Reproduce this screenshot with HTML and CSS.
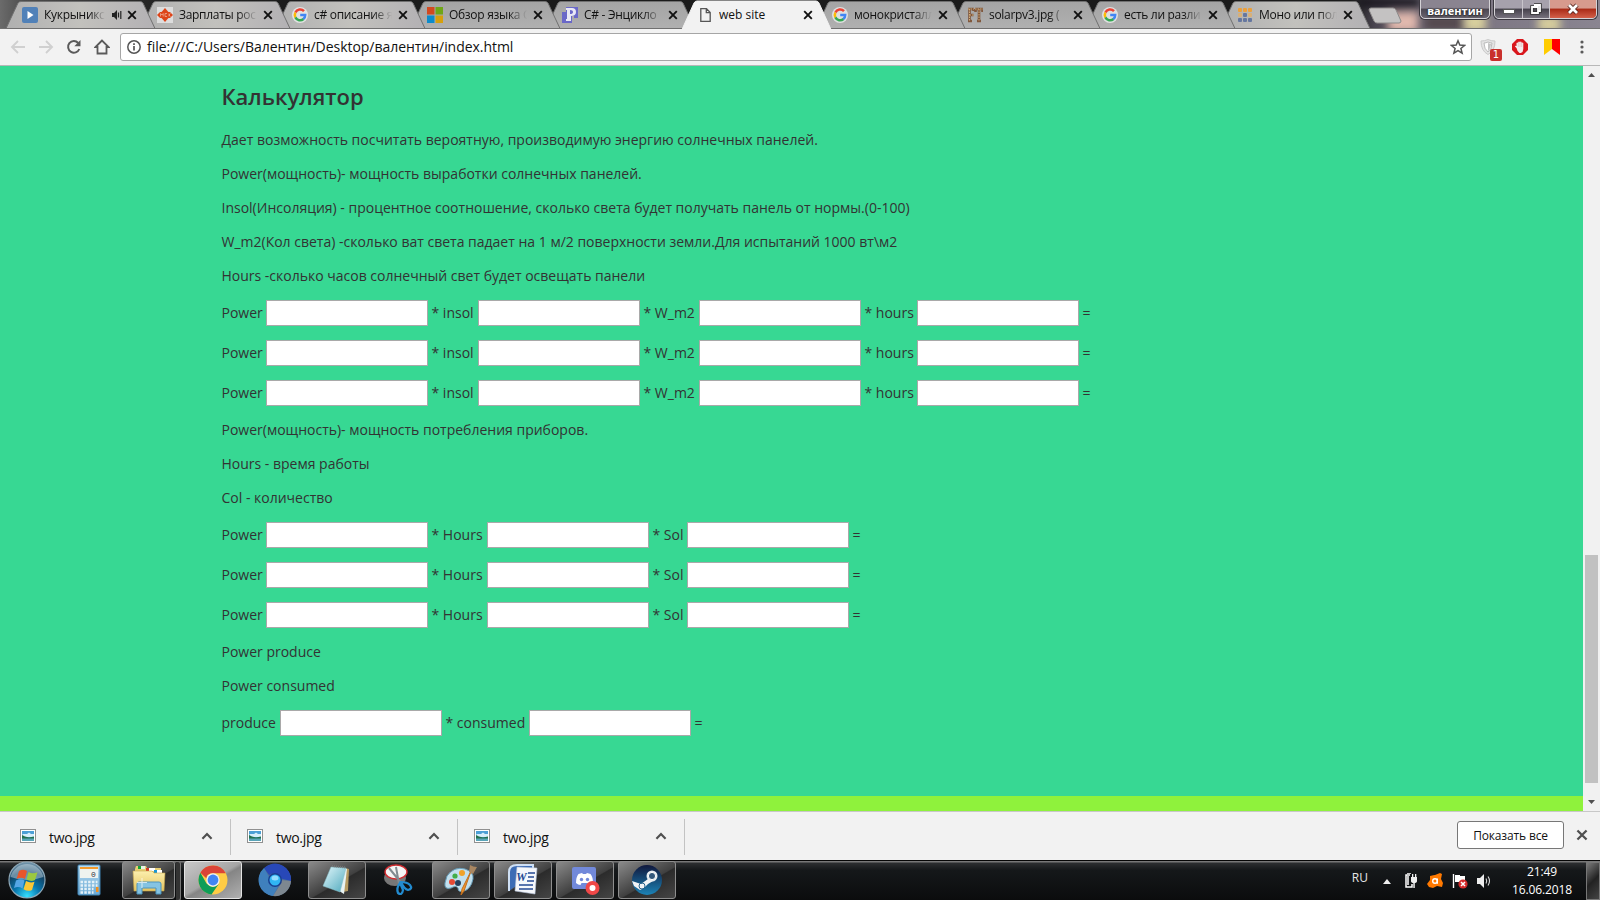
FILE: index.html
```html
<!DOCTYPE html>
<html lang="ru">
<head>
<meta charset="utf-8">
<title>web site</title>
<link rel="stylesheet" href="styles.css">
</head>
<body>
<svg width="0" height="0" class="defs">
  <defs>
    <linearGradient id="tabfill" x1="0" x2="0" y1="0" y2="1"><stop offset="0" stop-color="#a4a4a4"/><stop offset="1" stop-color="#b0b0b0"/></linearGradient>
    <linearGradient id="tablight" x1="0" x2="1" y1="0" y2="0"><stop offset="0" stop-color="#b0b0b0"/><stop offset=".5" stop-color="#c2c1bd"/><stop offset="1" stop-color="#b3b1b4"/></linearGradient>
    <symbol id="close" viewBox="0 0 10 10"><path d="M1.2 1.2 8.8 8.8M8.800 1.2 1.2 8.8" stroke="currentColor" stroke-width="1.9" fill="none"/></symbol>
    <symbol id="google" viewBox="0 0 16 16"><circle cx="8" cy="8" r="8" fill="#f1f1f1" opacity=".75"/><g fill="none" stroke-width="2.5"><path d="M12 4.2A5.2 5.2 0 0 0 3.4 5.6" stroke="#ea4335"/><path d="M3.4 5.6a5.2 5.2 0 0 0 0 4.8" stroke="#fbbc05"/><path d="M3.4 10.4A5.2 5.2 0 0 0 11.5 12" stroke="#34a853"/><path d="M11.3 12.1A5.2 5.2 0 0 0 13.2 8H8.2" stroke="#4285f4"/></g></symbol>
    <symbol id="pic" viewBox="0 0 16 14"><rect x=".5" y=".5" width="15" height="13" fill="#fff" stroke="#909090"/><rect x="2" y="2" width="12" height="10" fill="#4c9fd6"/><path d="M3 5h4l2-1.500 2 1.500h3v3H2V6z" fill="#d6eefb"/><path d="M2 6l3 1.500 4 1 5-1V10H2z" fill="#22704e"/><path d="M2 9.500h12V12H2z" fill="#5aa4b8"/></symbol>
    <symbol id="chev" viewBox="0 0 10 7"><path d="M1 6 5 1.800 9 6" fill="none" stroke="#505050" stroke-width="1.900"/></symbol>
    <radialGradient id="orb" cx=".5" cy=".95" r=".9"><stop offset="0" stop-color="#35e0ff"/><stop offset=".4" stop-color="#0877ae"/><stop offset=".75" stop-color="#124466"/><stop offset="1" stop-color="#6b8fa6"/></radialGradient>
    <linearGradient id="calc" x1="0" x2="0" y1="0" y2="1"><stop offset="0" stop-color="#b7dcf2"/><stop offset="1" stop-color="#6ba9d4"/></linearGradient>
    <linearGradient id="folder" x1="0" x2="0" y1="0" y2="1"><stop offset="0" stop-color="#fcefae"/><stop offset="1" stop-color="#e5c460"/></linearGradient>
    <linearGradient id="steam" x1="0" x2="0" y1="0" y2="1"><stop offset="0" stop-color="#10173c"/><stop offset="1" stop-color="#1c83b6"/></linearGradient>
    <linearGradient id="note" x1="0" x2="1" y1="0" y2="1"><stop offset="0" stop-color="#e2f7fb"/><stop offset="1" stop-color="#4fa9bd"/></linearGradient>
  </defs>
</svg>
<div class="window">
  <header class="frame">
    <div class="glass"><i class="g1"></i><i class="g2"></i><i class="g3"></i><i class="g4"></i><i class="g5"></i></div>
    <svg class="shapes" width="1600" height="29" viewBox="0 0 1600 29" stroke="#707070" stroke-width="1">
      <path d="M1221 28.500 1233 3Q1234 1.500 1236 1.500H1355Q1357 1.500 1358 3L1370 28.500z" fill="url(#tablight)"/>
      <path d="M1086 28.500 1098 3Q1099 1.500 1101 1.500H1220Q1222 1.500 1223 3L1235 28.500z" fill="url(#tabfill)"/>
      <path d="M951 28.500 963 3Q964 1.500 966 1.500H1085Q1087 1.500 1088 3L1100 28.500z" fill="url(#tabfill)"/>
      <path d="M816 28.500 828 3Q829 1.500 831 1.500H950Q952 1.500 953 3L965 28.500z" fill="url(#tabfill)"/>
      <path d="M546 28.500 558 3Q559 1.500 561 1.500H680Q682 1.500 683 3L695 28.500z" fill="url(#tabfill)"/>
      <path d="M411 28.500 423 3Q424 1.500 426 1.500H545Q547 1.500 548 3L560 28.500z" fill="url(#tabfill)"/>
      <path d="M276 28.500 288 3Q289 1.500 291 1.500H410Q412 1.500 413 3L425 28.500z" fill="url(#tablight)"/>
      <path d="M141 28.500 153 3Q154 1.500 156 1.500H275Q277 1.500 278 3L290 28.500z" fill="url(#tablight)"/>
      <path d="M6 28.500 18 3Q19 1.500 21 1.500H140Q142 1.500 143 3L155 28.500z" fill="url(#tablight)"/>
      <path d="M0 28.500H1600" />
      <path d="M682 29.500 694 3Q695 1 697 1H816Q818 1 819 3L831 29.500z" fill="#f2f2f2" stroke="#f2f2f2"/>
      <path d="M1371 8H1393Q1395 8 1396 10L1401 21Q1401 23 1399 23H1377Q1375 23 1374 21L1369 10Q1369 8 1371 8z" fill="#c4c2c2" stroke="#8d8a8a"/>
    </svg>
    <nav class="tabs">
      <div class="tab first"><svg class="ico" viewBox="0 0 16 16"><rect width="16" height="16" rx="2" fill="#5181b8"/><path d="M5.500 4 11.500 8l-6 4z" fill="#fff"/></svg><span class="t">Кукрыникс</span><svg class="snd" viewBox="0 0 10 10"><path d="M0 3h2l3-3v10L2 7H0z" fill="#222"/><path d="M6.500 2.500v5M8.800 1v8" stroke="#222" stroke-width="1.200"/></svg><svg class="x"><use href="#close"/></svg></div>
      <div class="tab"><svg class="ico" viewBox="0 0 16 16"><rect width="16" height="16" fill="#ddd"/><path d="M8 1 14 8 8 15 2 8z" fill="#dd4418"/><path d="M0 8 3 5h10l3 3-3 3H3z" fill="#dd4418"/><path d="M3.500 6.500v3M3.500 6.500l1.500 1.500 1.200-1.500v3M8 6.500v3h2M8 6.500h2M12 6.500v3M13.500 6.500l-1.500 1.500 1.500 1.500" fill="none" stroke="#f0a990" stroke-width=".8"/></svg><span class="t">Зарплаты рос</span><svg class="x"><use href="#close"/></svg></div>
      <div class="tab"><svg class="ico"><use href="#google"/></svg><span class="t">c# описание я</span><svg class="x"><use href="#close"/></svg></div>
      <div class="tab"><svg class="ico" viewBox="0 0 16 16"><path d="M0 0h7.500v7.500H0z" fill="#d3491f"/><path d="M8.500 0H16v7.500H8.500z" fill="#6fa616"/><path d="M0 8.500h7.500V16H0z" fill="#0c8bcb"/><path d="M8.500 8.500H16V16H8.500z" fill="#d6a00c"/></svg><span class="t">Обзор языка C</span><svg class="x"><use href="#close"/></svg></div>
      <div class="tab"><svg class="ico" viewBox="0 0 16 16"><path d="M0 5h4V0h12v11h-4V9h-2v7H0z" fill="#6a68c8"/><path d="M4 1h6q4 0 4 4t-5 4v5H4V12h1V3H4zM8 3v4q3 0 3-2T8 3z" fill="#e9e8f6"/></svg><span class="t">C# - Энцикло</span><svg class="x"><use href="#close"/></svg></div>
      <div class="tab active"><svg class="ico" viewBox="0 0 16 16"><path d="M3.800 1.700H9.500l3.700 3.700v9H3.800zM9.300 2v3.600H13" fill="none" stroke="#555" stroke-width="1.300"/></svg><span class="t">web site</span><svg class="x"><use href="#close"/></svg></div>
      <div class="tab"><svg class="ico"><use href="#google"/></svg><span class="t">монокристалл</span><svg class="x"><use href="#close"/></svg></div>
      <div class="tab"><svg class="ico" viewBox="0 0 16 16"><path d="M1 2h6M2.500 2v12M1 14h4M2.500 8h4M6.500 2v2M8 2h8M8.500 2v3M15.500 2v3M12 2v12M10 14h4" fill="none" stroke="#80583e" stroke-width="2.600"/><path d="M1 2h6M2.500 2v12M2.500 8h4M8 2h8M12 2v12" fill="none" stroke="#d3ac78" stroke-width="1" stroke-dasharray="1.500 1"/></svg><span class="t">solarpv3.jpg (</span><svg class="x"><use href="#close"/></svg></div>
      <div class="tab"><svg class="ico"><use href="#google"/></svg><span class="t">есть ли разли</span><svg class="x"><use href="#close"/></svg></div>
      <div class="tab"><svg class="ico" viewBox="0 0 16 16"><g fill="#eba03c"><rect x="1" y="1" width="4" height="4" rx="1"/><rect x="6" y="1" width="4" height="4" rx="1"/><rect x="11" y="1" width="4" height="4" rx="1"/></g><g fill="#66779f"><rect x="1" y="6" width="4" height="4" rx="1" fill="#d8b078"/><rect x="6" y="6" width="4" height="4" rx="1"/><rect x="11" y="6" width="4" height="4" rx="1" fill="#d8b078"/><rect x="1" y="11" width="4" height="4" rx="1"/><rect x="6" y="11" width="4" height="4" rx="1"/><rect x="11" y="11" width="4" height="4" rx="1"/></g></svg><span class="t">Моно или пол</span><svg class="x"><use href="#close"/></svg></div>
    </nav>
    <div class="user">валентин</div>
    <div class="controls">
      <div class="min"><svg width="12" height="5"><rect x=".5" y=".5" width="11" height="4" fill="#fff" stroke="#555"/></svg></div>
      <div class="max"><svg width="12" height="12" fill="none"><path d="M4 2h6v6H8M2 4h6v6H2z" stroke="#333" stroke-width="3.500"/><path d="M4 2h6v6H8M2 4h6v6H2z" stroke="#fff" stroke-width="1.800"/></svg></div>
      <div class="cls"><svg width="14" height="12" fill="none"><path d="m3 2 8 8M11 2l-8 8" stroke="#50201a" stroke-width="4.500"/><path d="m3 2 8 8M11 2l-8 8" stroke="#fff" stroke-width="2.800"/></svg></div>
    </div>
  </header>
  <div class="toolbar">
    <svg class="nav" viewBox="0 0 16 16"><path d="M15 8H2.500M8 2 2 8l6 6" stroke="#d0d0d0" stroke-width="1.900" fill="none"/></svg>
    <svg class="nav" viewBox="0 0 16 16"><path d="M1 8h12.500M8 2l6 6-6 6" stroke="#d0d0d0" stroke-width="1.900" fill="none"/></svg>
    <svg class="nav" viewBox="0 0 16 16"><path d="M13.300 10A5.800 5.800 0 1 1 12.200 4" stroke="#5a5a5a" stroke-width="2" fill="none"/><path d="M14.500 1v6.300H8.300z" fill="#5a5a5a"/></svg>
    <svg class="nav" viewBox="0 0 16 16"><path d="M8 1.500 1.500 8h2v6.500h9V8h2z" stroke="#5a5a5a" stroke-width="1.800" fill="none"/></svg>
    <div class="omni">
      <svg width="16" height="16" viewBox="0 0 16 16"><circle cx="8" cy="8" r="6.200" fill="none" stroke="#555" stroke-width="1.500"/><path d="M8 7v4.500M8 4.200v1.700" stroke="#555" stroke-width="1.700"/></svg>
      <span class="url">file:///C:/Users/Валентин/Desktop/валентин/index.html</span>
      <svg class="star" width="16" height="16" viewBox="0 0 16 16"><path d="m8 1.800 1.800 4.300 4.700.4-3.600 3 1.200 4.600L8 11.600l-4.100 2.500 1.200-4.600-3.600-3 4.700-.4z" fill="none" stroke="#555" stroke-width="1.500"/></svg>
    </div>
    <div class="ext shield"><svg width="16" height="16" viewBox="0 0 16 16"><path d="M1 2q4 0 7-1.500Q11 2 15 2q0 10-7 13.500Q1 12 1 2z" fill="#e3e3e3" stroke="#cacaca"/><path d="M4 4q2 0 4-1 2 1 4 1 0 6-4 9Q4 10 4 4z" fill="#fff" stroke="#bbb"/><path d="M8 4v8q3-3 3-7z" fill="#c4c4c4"/></svg><b>1</b></div>
    <svg class="ext" width="16" height="16" viewBox="0 0 16 16"><path d="M5 0h6l5 5v6l-5 5H5l-5-5V5z" fill="#d9171d"/><path d="M4.500 9 3 7.500q.2-1.300 1.500-.5V4q.9-1.200 1.700 0V3q.9-1.200 1.700 0 .9-1.200 1.700 0v1q1-1.200 1.700 0v6q0 3-2.500 4H7.500Q5 12 4.500 9z" fill="#f1eeee"/><path d="M6.300 4v4M8 3v5M9.700 4v4" stroke="#e3a4a4" stroke-width=".5"/></svg>
    <svg class="ext" width="16" height="16" viewBox="0 0 16 16"><path d="M0 0h8v10L0 16z" fill="#fc0"/><path d="M8 0h8v16L8 10z" fill="#f00"/></svg>
    <svg class="menu" width="4" height="14" fill="#5a5a5a"><circle cx="2" cy="2" r="1.600"/><circle cx="2" cy="7" r="1.600"/><circle cx="2" cy="12" r="1.600"/></svg>
  </div>
  <div class="view">
    <main class="page">
      <section class="calc">
        <h2>Калькулятор</h2>
        <p>Дает возможность посчитать вероятную, производимую энергию солнечных панелей.</p>
        <p>Power(мощность)- мощность выработки солнечных панелей.</p>
        <p>Insol(Инсоляция) - процентное соотношение, сколько света будет получать панель от нормы.(0-100)</p>
        <p>W_m2(Кол света) -сколько ват света падает на 1 м/2 поверхности земли.Для испытаний 1000 вт\м2</p>
        <p>Hours -сколько часов солнечный свет будет освещать панели</p>
        <div class="row"><label class="w-power">Power</label><input><label class="w-insol">* insol</label><input><label class="w-wm">* W_m2</label><input><label class="w-hours">* hours</label><input><span>=</span></div>
        <div class="row"><label class="w-power">Power</label><input><label class="w-insol">* insol</label><input><label class="w-wm">* W_m2</label><input><label class="w-hours">* hours</label><input><span>=</span></div>
        <div class="row"><label class="w-power">Power</label><input><label class="w-insol">* insol</label><input><label class="w-wm">* W_m2</label><input><label class="w-hours">* hours</label><input><span>=</span></div>
        <p>Power(мощность)- мощность потребления приборов.</p>
        <p>Hours - время работы</p>
        <p>Col - количество</p>
        <div class="row"><label class="w-power">Power</label><input><label class="w-time">* Hours</label><input><label class="w-sol">* Sol</label><input><span>=</span></div>
        <div class="row"><label class="w-power">Power</label><input><label class="w-time">* Hours</label><input><label class="w-sol">* Sol</label><input><span>=</span></div>
        <div class="row"><label class="w-power">Power</label><input><label class="w-time">* Hours</label><input><label class="w-sol">* Sol</label><input><span>=</span></div>
        <p>Power produce</p>
        <p>Power consumed</p>
        <div class="row"><label class="w-prod">produce</label><input><label class="w-cons">* consumed</label><input><span>=</span></div>
      </section>
      <footer class="lime"></footer>
    </main>
    <aside class="scroll"><svg width="17" height="17"><path d="M5 11h7L8.500 7z" fill="#505050"/></svg><div class="thumb"></div><svg width="17" height="17"><path d="M5 6h7l-3.500 4z" fill="#505050"/></svg></aside>
  </div>
  <div class="shelf">
    <div class="file"><svg width="16" height="14"><use href="#pic"/></svg><span>two.jpg</span><svg class="chev"><use href="#chev"/></svg></div>
    <div class="file"><svg width="16" height="14"><use href="#pic"/></svg><span>two.jpg</span><svg class="chev"><use href="#chev"/></svg></div>
    <div class="file"><svg width="16" height="14"><use href="#pic"/></svg><span>two.jpg</span><svg class="chev"><use href="#chev"/></svg></div>
    <button class="all">Показать все</button>
    <svg class="shut"><use href="#close"/></svg>
  </div>
  <div class="taskbar">
    <div class="start"><svg width="38" height="38" viewBox="0 0 38 38"><circle cx="19" cy="19" r="18" fill="url(#orb)" stroke="#8fa9b8" stroke-width="1.200"/><path d="M2.500 16A17 17 0 0 1 35.500 16Q19 22 2.500 16z" fill="#d5e5ee" opacity=".45"/><path d="M11 10q4-2.500 8 0l-2 8q-4-2.500-8.500 0z" fill="#e8562b"/><path d="M20.500 11q4 2.500 9 .2L27 19q-4 2-8.500-.5z" fill="#9bc93f"/><path d="M8 19.500q4.500-2.500 8.500 0l-2 8q-4-2.500-8.500-.5z" fill="#56a6e5"/><path d="M18 20q4.500 2.500 8.500.7L24 29q-4 2-8.500-.7z" fill="#fbc735"/></svg></div>
    <div class="app bare"><svg width="24" height="32" viewBox="0 0 24 32"><rect x="1" y="1" width="22" height="30" rx="1" fill="url(#calc)" stroke="#3f82b2"/><path d="M3 3h18v2H3z" fill="#f39a2c"/><path d="M3 5h18v9H3z" fill="#eef3ef"/><text x="14" y="12.500" class="digit">0</text><g stroke="#e4f1f8" stroke-width="2.300" stroke-dasharray="2.500 1.300"><path d="M3.500 18h17M3.500 21.500h17M3.500 25h13M3.500 28.500h13"/></g><path d="M19 23h2.500v5H19z" fill="#f08f1e"/></svg></div>
    <div class="app stack"><svg width="34" height="32" viewBox="0 0 34 32"><path d="M3 5l1-3h10l1 2h14v5H3z" fill="#e8cf76"/><path d="M6 2h7v3H6z" fill="#e9f5e6"/><path d="M6 2h3v3H6z" fill="#15a534"/><path d="M14 4h9v3h-9z" fill="#fff"/><path d="M14 4h3v3h-3z" fill="#d23b28"/><path d="M22 6h8v3h-8z" fill="#fff"/><path d="M22 6h3v3h-3z" fill="#1997d5"/><path d="M1 7h19l2 2h11l-1 18H2z" fill="url(#folder)" stroke="#c6a549" stroke-width=".6"/><path d="M5 30V20q0-2 2-2h20q2 0 2 2v10h-5v-6H10v6z" fill="#85c3e2" stroke="#4d94bd"/><path d="M10 14v10M5 18.500h10" stroke="#fff" opacity=".7"/></svg></div>
    <div class="app lit"><svg width="32" height="32" viewBox="0 0 32 32"><circle cx="16" cy="16" r="14.500" fill="#fc4"/><path d="M3.400 8.800A14.500 14.500 0 0 1 28.800 9.300H16q-6 0-6.700 5z" fill="#db4437"/><path d="M3.400 8.800A14.500 14.500 0 0 0 14.500 30.500l7.200-10.500q-6.200 6-12.200-.5z" fill="#0f9d58"/><circle cx="16" cy="16" r="6.700" fill="#f1f1f1"/><circle cx="16" cy="16" r="5.400" fill="#4285f4"/></svg></div>
    <div class="app bare"><svg width="34" height="34" viewBox="0 0 34 34"><circle cx="17" cy="17" r="16" fill="#4d6f9a"/><path d="M6 5A16 16 0 0 1 33 18L21 15Q19 8 11 12z" fill="#2848b8"/><path d="M6 5A16 16 0 0 0 15 33l6-11q-9 1-9-6z" fill="#3f80bd"/><path d="M33 18A16 16 0 0 1 15 33l7-11 1-5z" fill="#7d8790"/><circle cx="17" cy="17" r="7" fill="#193f91"/><circle cx="17" cy="17" r="5.500" fill="#30b6f4"/><ellipse cx="17" cy="15" rx="3.500" ry="2.500" fill="#94ddff"/></svg></div>
    <div class="app"><svg width="32" height="32" viewBox="0 0 32 32"><path d="m24 4 4 1-1 22-5 1z" fill="#b69b62"/><path d="M22 4 26 5 23 30 15 25z" fill="#e8f3f3"/><path d="M10 3 25 4 19 28 2 22z" fill="url(#note)" stroke="#85bcc7" stroke-width=".5"/><path d="m11 2 14 1.500" stroke="#777" stroke-width="2" stroke-dasharray="1 1"/></svg></div>
    <div class="app bare"><svg width="32" height="32" viewBox="0 0 32 32"><ellipse cx="12" cy="14" rx="11" ry="8" fill="#777"/><ellipse cx="13" cy="8" rx="11" ry="7" fill="#f5f5f5" stroke="#d02b30" stroke-width="1.400"/><path d="M6 4 19 20M13 3l3 17" stroke="#818b91" stroke-width="2"/><path d="m17 19 2 1" stroke="#cde" stroke-width="3"/><g fill="none" stroke="#228bcf" stroke-width="2.200"><path d="M17 19q-4 5-2 10 4 3 5-3zM18 18q6 0 9 3 3 4-2 5-4-1-7-8z"/></g></svg></div>
    <div class="app"><svg width="34" height="32" viewBox="0 0 34 32"><path d="M3 12Q10 2 21 5q9 3 8 10-2 10-9 12-6 2-6-3-2-3-7 0-7 2-6-5z" fill="#c2e0ee" stroke="#679db9"/><circle cx="8" cy="18" r="3" fill="#e54a35"/><circle cx="11" cy="12" r="2.600" fill="#42ae49"/><circle cx="18" cy="9" r="3" fill="#f0a229"/><circle cx="14" cy="19" r="3" fill="#26415e"/><path d="m27 7-7 20-3 4 1-6z" fill="#ec9430" stroke="#c26e1b"/><path d="m25 8 1-7q3 2 7 2l-4 7z" fill="#a98661"/></svg></div>
    <div class="app"><svg width="32" height="32" viewBox="0 0 32 32"><path d="M2 27V8q0-7 8-7h16v9" fill="#3d6cb5" stroke="#cfe0f5" stroke-width="2"/><path d="m10 3 20 1-2 26L8 27z" fill="#f5f7fb" stroke="#b3c1d8" stroke-width=".6"/><path d="M21 9h7M21 13h6M20 17h7M12 21h14M12 25h14" stroke="#254a94" stroke-width="1.700"/><text x="9" y="17" class="word">W</text></svg></div>
    <div class="app"><svg width="32" height="32" viewBox="0 0 32 32"><path d="M5 3h20q2 0 2 2v25l-6-5H5q-2 0-2-2V5q0-2 2-2z" fill="#7289da"/><path d="M7 19q0-6 2.500-9l3.500-1 1 1h3l1-1 3.500 1q2.500 3 2.500 9-2 2-4.500 2l-1-2h-6l-1 2Q9 21 7 19z" fill="#fff"/><circle cx="12.500" cy="15.500" r="1.700" fill="#7289da"/><circle cx="18.500" cy="15.500" r="1.700" fill="#7289da"/><circle cx="23.500" cy="24" r="7" fill="#f04747"/><circle cx="23.500" cy="24" r="3" fill="#fff"/></svg></div>
    <div class="app"><svg width="32" height="32" viewBox="0 0 32 32"><circle cx="16" cy="16" r="15" fill="url(#steam)"/><path d="m1 17 9 3 7-5 1-4h4v6l-5 3-4 4-4 2-6-4z" fill="#f2f4f6"/><circle cx="21" cy="12" r="5.500" fill="#e8edf1"/><circle cx="21" cy="12" r="3.600" fill="#34597c" stroke="#fff"/><circle cx="11" cy="22" r="3" fill="none" stroke="#28648d"/></svg></div>
    <div class="tray">
      <span class="lang">RU</span>
      <svg class="up" width="8" height="5"><path d="M0 5h8L4 0z" fill="#eee"/></svg>
      <svg class="t1" width="16" height="16" viewBox="0 0 16 16"><path d="M7 2H3v12h6v-3M4 0h4M5 3v9" fill="none" stroke="#fff" stroke-width="1.500"/><path d="M8 4h6v4q0 2-3 2T8 8zM9 1h1.300v3H9zM12 1h1.300v3H12zM10.300 10h1.500v5h-1.500z" fill="#eee"/></svg>
      <svg class="t2" width="17" height="16" viewBox="0 0 17 16"><path d="M3 3q4-1 5-1l5-2 2 1-1 5 2 4-1 4-5-1-4 2-4-1-2-3 3-4z" fill="#ff7900"/><circle cx="8" cy="8" r="2.300" fill="none" stroke="#fff" stroke-width="1.400"/><path d="M10.300 5.500v5.200" stroke="#fff" stroke-width="1.400"/></svg>
      <svg class="t3" width="16" height="16" viewBox="0 0 16 16"><path d="M1.500 1v14" stroke="#fff" stroke-width="1.400"/><path d="M3 2h5v1h5v7H8V9H3z" fill="#fff"/><circle cx="11" cy="11" r="4.600" fill="#d42b2b"/><path d="m9 9 4 4M13 9l-4 4" stroke="#fff" stroke-width="1.500"/></svg>
      <svg class="t4" width="16" height="16" viewBox="0 0 16 16"><path d="M1 5h3l4-4v14l-4-4H1z" fill="#eee"/><path d="M10 5.500q1.500 2.500 0 5M12 3.500q3 4.500 0 9" fill="none" stroke="#ddd" stroke-width="1.100"/></svg>
      <div class="clock"><div>21:49</div><div>16.06.2018</div></div>
      <div class="desk"></div>
    </div>
  </div>
</div>
</body>
</html>
```
FILE: styles.css
```css
* { box-sizing: border-box; }
body { margin: 0; font-family: "Open Sans", "Noto Sans", sans-serif; }
svg { display: block; flex: none; }
.defs { position: absolute; }
.window { width: 1600px; height: 900px; display: flex; flex-direction: column; overflow: hidden; }

.frame { position: relative; height: 29px; flex: none; background: linear-gradient(90deg, #6b6b6b 0, #4c4c4c 25px, #242424 150px, #1b1b1b 300px, #1b1b1b 1350px, #4a4550 1375px, #77707d 1430px, #8a8591 1600px); overflow: hidden; }
.glass i { position: absolute; filter: blur(4px); }
.g1 { left: 1358px; top: -2px; width: 62px; height: 9px; background: #15131a; }
.g2 { left: 1388px; top: 12px; width: 30px; height: 20px; background: #e2b9ae; }
.g3 { left: 1424px; top: 15px; width: 40px; height: 16px; background: #54494e; }
.g4 { left: 1464px; top: 12px; width: 22px; height: 20px; background: #d8cf9d; }
.g5 { left: 1538px; top: 16px; width: 22px; height: 16px; background: #d8cf9d; }
.shapes { position: absolute; left: 0; top: 0; }
.tabs { position: relative; display: flex; padding-left: 22px; height: 29px; }
.tab { width: 135px; flex: none; display: flex; align-items: center; font-size: 12px; color: #111; }
.tab .ico { width: 16px; height: 16px; margin-right: 6px; }
.tab .t { width: 78px; white-space: nowrap; overflow: hidden; letter-spacing: -.3px; -webkit-mask-image: linear-gradient(90deg, #000 76%, transparent 100%); mask-image: linear-gradient(90deg, #000 76%, transparent 100%); }
.tab.first .t { width: 61px; }
.snd { width: 10px; height: 10px; margin: 0 4px 0 7px; }
.tab .x { width: 10px; height: 10px; margin-left: 5.500px; color: #111; }
.tab.first .x { margin-left: 1px; }
.tab.active .t { letter-spacing: 0; -webkit-mask-image: none; mask-image: none; }
.user, .controls { position: absolute; top: -1px; height: 20px; border: 1px solid #d4d2d6; border-radius: 0 0 5px 5px; box-shadow: 0 0 0 1px #3c3840; }
.user { left: 1420px; width: 70px; text-align: center; font: bold 11px/21px "Open Sans", sans-serif; color: #fff; text-shadow: 0 0 2px #222, 0 1px 2px #222; background: linear-gradient(#8a8490 45%, #4b4650 50%, #69646f); }
.controls { left: 1494px; width: 103px; display: flex; overflow: hidden; }
.controls div { display: flex; align-items: center; justify-content: center; background: linear-gradient(#a6a1ac 45%, #45414b 50%, #77717d); border-right: 1px solid #c8c5cb; }
.controls .min { width: 28px; padding-top: 4px; }
.controls .max { width: 27px; }
.controls .cls { flex: 1; border: 0; background: linear-gradient(#d79a8d 45%, #a92a16 50%, #d3604a); }

.toolbar { height: 37px; flex: none; display: flex; align-items: center; background: #f2f2f2; border-bottom: 1px solid #b8b8b8; padding-left: 10px; }
.nav { width: 16px; height: 16px; margin-right: 12px; }
.nav:nth-child(4) { margin-right: 10px; }
.omni { width: 1352px; height: 28px; border: 1px solid #a6a6a6; border-radius: 3px; background: #fff; display: flex; align-items: center; padding: 0 5px; }
.url { flex: 1; margin: -2px 0 0 5px; font-size: 14px; color: #111; letter-spacing: -.04px; }
.ext { margin-left: 16px; }
.shield { position: relative; margin-left: 8px; }
.shield b { position: absolute; left: 10px; top: 10px; width: 12px; height: 12px; border-radius: 2px; background: #c9302c; color: #fff; font: 10px/12px "DejaVu Sans", sans-serif; text-align: center; }
.shield + .ext { margin-left: 16px; }
.menu { margin-left: 20px; }

.view { flex: none; height: 745px; display: flex; }
.page { width: 1583px; background: #37d893; display: flex; flex-direction: column; }
.calc { flex: 1; padding: 14px 0 0 221.5px; color: #333; font-size: 14px; line-height: 24px; }
.calc h2 { margin: 0 0 16px; font-size: 22px; line-height: 32px; font-weight: 600; }
.calc p { margin: 0 0 10px; white-space: nowrap; }
.row { display: flex; align-items: center; height: 30px; margin-bottom: 10px; white-space: pre; }
.row input { width: 162px; height: 26px; flex: none; border: 1px solid #a9a9a9; background: #fff; padding: 0; border-radius: 0; }
.row label, .row span { flex: none; }
.row label:not(:first-child), .row span { padding-left: 3.500px; }
.w-power { width: 44.5px; }
.w-insol { width: 50px; }
.w-wm { width: 59px; }
.w-hours { width: 56px; }
.w-time { width: 59px; }
.w-sol { width: 38px; }
.w-prod { width: 58.5px; }
.w-cons { width: 87px; }
.lime { height: 15px; background: #8ff23c; }
.scroll { width: 17px; background: #f1f1f1; display: flex; flex-direction: column; }
.thumb { width: 13px; height: 228px; margin: 472px 2px 11px; background: #c1c1c1; }

.shelf { height: 49px; flex: none; background: #f2f2f2; border-top: 1px solid #c8c8c8; display: flex; align-items: center; }
.file { width: 227px; height: 36px; margin-top: 1px; border-right: 1px solid #c3c3c3; display: flex; align-items: center; padding: 0 17px 2px 16px; font-size: 14px; color: #111; }
.file:first-child { width: 231px; padding-left: 20px; }
.file span { flex: 1; margin: 3px 0 0 13px; letter-spacing: -.3px; }
.file .chev { width: 12px; height: 8px; }
.all { margin: -2px 0 0 auto; width: 107px; height: 28px; border: 1px solid #777; border-radius: 3px; background: #fff; font: 12px "Open Sans", sans-serif; color: #111; padding: 0; white-space: nowrap; letter-spacing: -.15px; }
.shut { width: 12px; height: 12px; margin: -2px 12px 0; color: #505050; }

.taskbar { height: 40px; flex: none; display: flex; gap: 4px; background: linear-gradient(#060606 0, #060606 1px, #777 1px, #777 2px, #2c2e30 3px, #15181a 10px, #0b0c0d 40px); }
.start { width: 56px; padding: 1px 0 0 8px; }
.app { width: 58px; height: 38px; margin-top: 1px; display: flex; align-items: center; justify-content: center; border: 1px solid #8e8e8e; border-radius: 3px; background: linear-gradient(150deg, #8a8a8a 0, #5a5a5a 35%, #404040 54%, #2b2b2b 56%, #454545 100%); }
.bare { background: none; border-color: transparent; }
.lit { background: linear-gradient(150deg, #c9c9c9 0, #a5a5a5 48%, #858585 54%, #b0b0b0 100%); border-color: #e4e4e4; }
.stack { width: 53px; margin-right: 5px; position: relative; }
.stack::after { content: ""; position: absolute; left: 53px; top: -1px; width: 4px; height: 38px; border: 1px solid #777; border-left: 0; border-radius: 0 3px 3px 0; background: #333; }
.digit { font: 8px "Liberation Mono", monospace; fill: #334; }
.word { font: italic bold 12px "Liberation Serif", serif; fill: #254a94; }
.tray { margin-left: auto; display: flex; align-items: center; height: 40px; color: #fff; font-size: 12px; }
.lang { margin: -6px 15px 0 0; color: #e6e6e6; }
.up { margin: 2px 12px 0 0; }
.t1, .t2, .t3, .t4 { margin: 2px 8px 0 0; }
.clock { width: 74px; margin: 2px 7px 0 5px; text-align: center; line-height: 18px; letter-spacing: -.1px; }
.desk { width: 14px; height: 38px; margin-top: 2px; border: 1px solid #777; background: linear-gradient(135deg, #7b7b7b, #222 50%, #444); }
```
